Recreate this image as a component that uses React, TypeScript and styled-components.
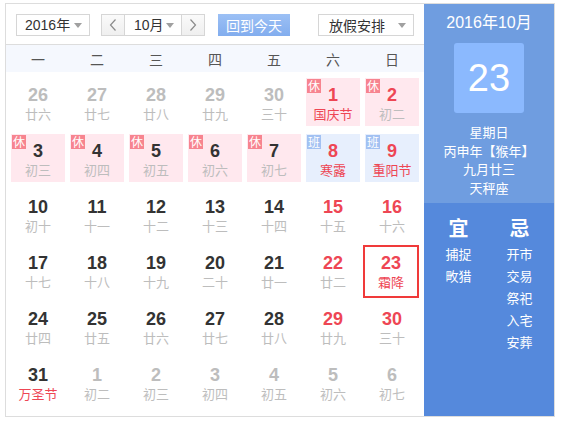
import React from "react";
import styled, { createGlobalStyle, css } from "styled-components";

const Global = createGlobalStyle`
  html, body { margin: 0; padding: 0; background: #fff; }
  body { font-family: "Liberation Sans", Arial, "Noto Sans CJK SC", sans-serif; }
`;

const Frame = styled.div`
  margin: 3px 0 0 5px;
  width: 548px;
  height: 412px;
  border: 1px solid #ddd;
  display: flex;
`;

const Left = styled.div`
  width: 418px;
  display: flex;
  flex-direction: column;
`;

const Toolbar = styled.div`
  height: 41px;
  box-sizing: border-box;
  padding: 10px 0 0 10px;
  border-bottom: 1px solid #ddd;
  display: flex;
  align-items: flex-start;
`;

const Select = styled.div<{ $w: number; $ml?: number; $cjk?: boolean }>`
  position: relative;
  box-sizing: border-box;
  width: ${(p) => p.$w}px;
  height: 22px;
  margin-left: ${(p) => p.$ml ?? 0}px;
  border: 1px solid #d6d6d6;
  background: #fff;
  font-size: 14px;
  line-height: 20px;
  color: #333;
  padding-left: ${(p) => (p.$cjk ? 10 : 8)}px;
  font-family: ${(p) =>
    p.$cjk
      ? `"Noto Sans CJK SC", sans-serif`
      : `"Liberation Sans", Arial, "Noto Sans CJK SC", sans-serif`};
`;

const Caret = styled.span`
  position: absolute;
  right: 7px;
  top: 8px;
  width: 0;
  height: 0;
  border-left: 4px solid transparent;
  border-right: 4px solid transparent;
  border-top: 5px solid #a0a0a0;
`;

const MonthGroup = styled.div`
  margin-left: 11px;
  display: flex;
  height: 22px;
  box-sizing: border-box;
  border: 1px solid #d6d6d6;
`;

const ArrowBtn = styled.div<{ $side: "l" | "r" }>`
  width: 22px;
  height: 20px;
  background: linear-gradient(#fafafa, #efefef);
  display: flex;
  align-items: center;
  justify-content: center;
  ${(p) =>
    p.$side === "l"
      ? css`border-right: 1px solid #d6d6d6;`
      : css`border-left: 1px solid #d6d6d6;`}
`;

const MonthSel = styled.div`
  position: relative;
  width: 56px;
  height: 20px;
  font-size: 14px;
  line-height: 20px;
  color: #333;
  padding-left: 9px;
  box-sizing: border-box;
  background: #fff;
`;

const TodayBtn = styled.div`
  margin-left: 13px;
  width: 72px;
  height: 22px;
  background: linear-gradient(#9cc0f5, #82adee);
  color: #fff;
  font-size: 14px;
  line-height: 22px;
  text-align: center;
  font-family: "Noto Sans CJK SC", sans-serif;
`;

const WeekHeader = styled.div`
  height: 27px;
  background: #f5f8fe;
  display: grid;
  grid-template-columns: repeat(7, 54px);
  column-gap: 5px;
  padding: 0 5px;
  align-items: center;
`;

const WeekDay = styled.div`
  text-align: center;
  font-size: 14px;
  color: #555;
  font-family: "Noto Sans CJK SC", sans-serif;
`;

const Grid = styled.div`
  display: grid;
  grid-template-columns: repeat(7, 54px);
  grid-auto-rows: 48px;
  column-gap: 5px;
  row-gap: 8px;
  padding: 6px 5px 9px;
`;

type Kind = "normal" | "rest" | "work";

const Cell = styled.div<{ $kind: Kind; $today?: boolean }>`
  position: relative;
  box-sizing: border-box;
  text-align: center;
  padding-top: 8px;
  background: ${(p) =>
    p.$kind === "rest" ? "#ffe8ee" : p.$kind === "work" ? "#e7effd" : "transparent"};
  ${(p) =>
    p.$today &&
    css`
      margin: -1px 0 -4px -2px;
      padding-top: 7px;
      border: 2px solid #f03a3a;
    `}
`;

const Num = styled.div<{ $c: string }>`
  font-family: "Liberation Sans", Arial, sans-serif;
  font-weight: bold;
  font-size: 18px;
  line-height: 18px;
  color: ${(p) => p.$c};
`;

const Lunar = styled.div<{ $c: string }>`
  font-family: "Noto Sans CJK SC", sans-serif;
  font-size: 13px;
  line-height: 19px;
  color: ${(p) => p.$c};
`;

const Badge = styled.span<{ $kind: Kind }>`
  position: absolute;
  top: 1px;
  left: 1px;
  width: 14px;
  height: 14px;
  background: ${(p) => (p.$kind === "rest" ? "#f7848f" : "#a2c1f2")};
  color: #fff;
  font-size: 12px;
  line-height: 14px;
  text-align: center;
  font-family: "Noto Sans CJK SC", sans-serif;
`;

const Right = styled.div`
  width: 130px;
  display: flex;
  flex-direction: column;
  color: #fff;
  font-family: "Noto Sans CJK SC", sans-serif;
`;

const RightTop = styled.div`
  height: 199px;
  background: #6f9de0;
  display: flex;
  flex-direction: column;
  align-items: center;
  padding-top: 9px;
  box-sizing: border-box;
`;

const YearMonth = styled.div`
  font-family: "Liberation Sans", Arial, "Noto Sans CJK SC", sans-serif;
  font-size: 16px;
  line-height: 20px;
`;

const BigDay = styled.div`
  margin-top: 10px;
  width: 70px;
  height: 70px;
  border-radius: 3px;
  background: #8bb9fe;
  font-family: "Liberation Sans", Arial, sans-serif;
  font-size: 38px;
  line-height: 70px;
  text-align: center;
`;

const Info = styled.div`
  margin-top: 10px;
  font-size: 13px;
  line-height: 18.5px;
  text-align: center;
`;

const RightBottom = styled.div`
  flex: 1;
  background: #5589dc;
  display: grid;
  grid-template-columns: 61px 61px;
  padding: 13px 0 0 4px;
  align-items: start;
`;

const Col = styled.div`
  display: flex;
  flex-direction: column;
  align-items: center;
`;

const ColTitle = styled.div`
  font-size: 20px;
  font-weight: bold;
  line-height: 24px;
  margin-bottom: 3px;
`;

const ColItem = styled.div`
  font-size: 13px;
  line-height: 22px;
`;

const Chevron = ({ dir }: { dir: "l" | "r" }) => (
  <svg width="8" height="12" viewBox="0 0 8 12">
    <polyline
      points={dir === "l" ? "6.5,0.5 1.5,6 6.5,11.5" : "1.5,0.5 6.5,6 1.5,11.5"}
      fill="none"
      stroke="#8a8a8a"
      strokeWidth="1.2"
    />
  </svg>
);

const DARK = "#333";
const RED = "#ee4654";
const GRAY = "#bdbdbd";

type Day = {
  n: number;
  l: string;
  nc: string;
  lc: string;
  kind?: Kind;
  today?: boolean;
};

const g = (n: number, l: string): Day => ({ n, l, nc: GRAY, lc: GRAY });
const d = (n: number, l: string): Day => ({ n, l, nc: DARK, lc: GRAY });
const w = (n: number, l: string): Day => ({ n, l, nc: RED, lc: GRAY });

const days: Day[] = [
  g(26, "廿六"), g(27, "廿七"), g(28, "廿八"), g(29, "廿九"), g(30, "三十"),
  { n: 1, l: "国庆节", nc: RED, lc: RED, kind: "rest" },
  { n: 2, l: "初二", nc: RED, lc: GRAY, kind: "rest" },
  { n: 3, l: "初三", nc: DARK, lc: GRAY, kind: "rest" },
  { n: 4, l: "初四", nc: DARK, lc: GRAY, kind: "rest" },
  { n: 5, l: "初五", nc: DARK, lc: GRAY, kind: "rest" },
  { n: 6, l: "初六", nc: DARK, lc: GRAY, kind: "rest" },
  { n: 7, l: "初七", nc: DARK, lc: GRAY, kind: "rest" },
  { n: 8, l: "寒露", nc: RED, lc: RED, kind: "work" },
  { n: 9, l: "重阳节", nc: RED, lc: RED, kind: "work" },
  d(10, "初十"), d(11, "十一"), d(12, "十二"), d(13, "十三"), d(14, "十四"), w(15, "十五"), w(16, "十六"),
  d(17, "十七"), d(18, "十八"), d(19, "十九"), d(20, "二十"), d(21, "廿一"), w(22, "廿二"),
  { n: 23, l: "霜降", nc: RED, lc: RED, today: true },
  d(24, "廿四"), d(25, "廿五"), d(26, "廿六"), d(27, "廿七"), d(28, "廿八"), w(29, "廿九"), w(30, "三十"),
  { n: 31, l: "万圣节", nc: DARK, lc: RED },
  g(1, "初二"), g(2, "初三"), g(3, "初四"), g(4, "初五"), g(5, "初六"), g(6, "初七"),
];

const weekDays = ["一", "二", "三", "四", "五", "六", "日"];

export default function App() {
  return (
    <>
      <Global />
      <Frame>
        <Left>
          <Toolbar>
            <Select $w={74}>
              2016年
              <Caret />
            </Select>
            <MonthGroup>
              <ArrowBtn $side="l">
                <Chevron dir="l" />
              </ArrowBtn>
              <MonthSel>
                10月
                <Caret />
              </MonthSel>
              <ArrowBtn $side="r">
                <Chevron dir="r" />
              </ArrowBtn>
            </MonthGroup>
            <TodayBtn>回到今天</TodayBtn>
            <Select $w={96} $ml={28} $cjk>
              放假安排
              <Caret />
            </Select>
          </Toolbar>
          <WeekHeader>
            {weekDays.map((x) => (
              <WeekDay key={x}>{x}</WeekDay>
            ))}
          </WeekHeader>
          <Grid>
            {days.map((day, i) => (
              <Cell key={i} $kind={day.kind ?? "normal"} $today={day.today}>
                {day.kind && day.kind !== "normal" && (
                  <Badge $kind={day.kind}>{day.kind === "rest" ? "休" : "班"}</Badge>
                )}
                <Num $c={day.nc}>{day.n}</Num>
                <Lunar $c={day.lc}>{day.l}</Lunar>
              </Cell>
            ))}
          </Grid>
        </Left>
        <Right>
          <RightTop>
            <YearMonth>2016年10月</YearMonth>
            <BigDay>23</BigDay>
            <Info>
              星期日
              <br />
              丙申年【猴年】
              <br />
              九月廿三
              <br />
              天秤座
            </Info>
          </RightTop>
          <RightBottom>
            <Col>
              <ColTitle>宜</ColTitle>
              <ColItem>捕捉</ColItem>
              <ColItem>畋猎</ColItem>
            </Col>
            <Col>
              <ColTitle>忌</ColTitle>
              <ColItem>开市</ColItem>
              <ColItem>交易</ColItem>
              <ColItem>祭祀</ColItem>
              <ColItem>入宅</ColItem>
              <ColItem>安葬</ColItem>
            </Col>
          </RightBottom>
        </Right>
      </Frame>
    </>
  );
}
